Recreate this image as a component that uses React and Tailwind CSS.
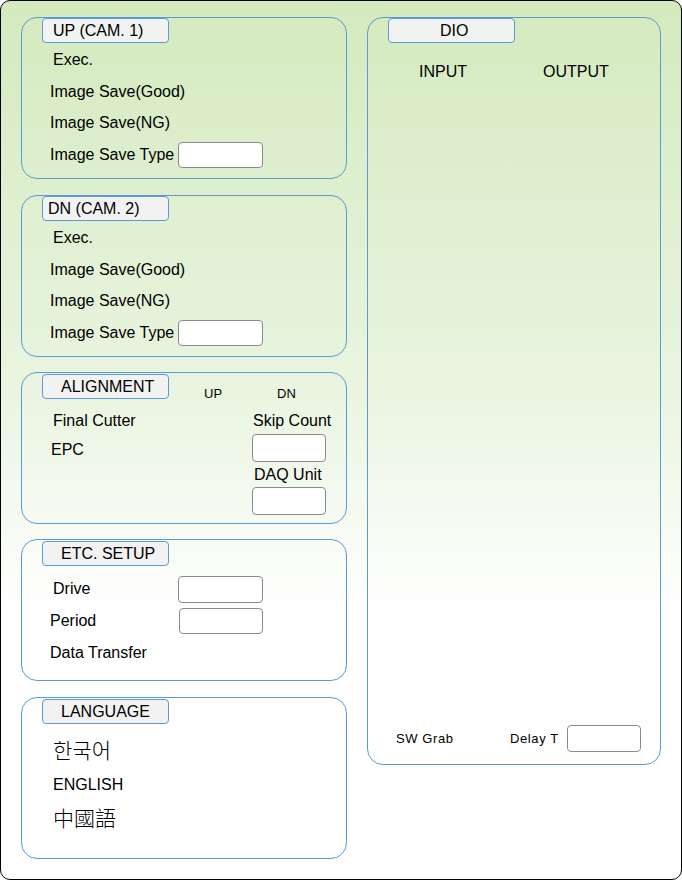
const font = { fontFamily: '"Liberation Sans", Arial, sans-serif' };

function Header({ children, className = '', pad = 'pl-[18px]' }) {
  return (
    <div
      className={`ml-[20px] w-[127px] h-[25px] shrink-0 bg-[#f2f2f2] border border-[#5b9bd5] rounded-[4px] flex items-center text-[16px] text-black leading-none ${pad} ${className}`}
    >
      {children}
    </div>
  );
}

function Box({ w = 'w-[85px]', h = 'h-[26px]', className = '' }) {
  return <div className={`${w} ${h} bg-white border border-[#8a8a8a] rounded-[4px] ${className}`} />;
}

function Panel({ className = '', children }) {
  return (
    <div className={`w-[326px] border border-[#5b9bd5] rounded-[16px] flex flex-col ${className}`}>
      {children}
    </div>
  );
}

function CamPanel({ title, pad, className = '' }) {
  return (
    <Panel className={`h-[162px] ${className}`}>
      <Header pad={pad}>{title}</Header>
      <div className="flex flex-col mt-[1.5px] text-[16px]">
        <div className="h-[31.5px] flex items-center pl-[31px]">Exec.</div>
        <div className="h-[31.5px] flex items-center pl-[28px]">Image Save(Good)</div>
        <div className="h-[31.5px] flex items-center pl-[28px]">Image Save(NG)</div>
        <div className="h-[31.5px] flex items-center pl-[28px]">
          <span className="w-[128px] shrink-0">Image Save Type</span>
          <Box />
        </div>
      </div>
    </Panel>
  );
}

export default function App() {
  return (
    <div
      style={font}
      className="w-[682px] h-[880px] border border-black rounded-[10px] bg-linear-to-b from-[#d4eabe] via-[#eaf5e1] via-45% to-white to-[70%] text-black flex gap-[20px] pl-[20px] pt-[16px]"
    >
      <div className="flex flex-col">
        <CamPanel title="UP (CAM. 1)" pad="pl-[10px]" />
        <CamPanel title="DN (CAM. 2)" pad="pl-[5px]" className="mt-[16px]" />

        <Panel className="h-[152px] mt-[15px]">
          <div className="flex items-start h-[26px] shrink-0">
            <Header className="mt-[1px] h-[24px]">ALIGNMENT</Header>
            <span className="ml-[35px] mt-[11px] text-[13px]">UP</span>
            <span className="ml-[55px] mt-[11px] text-[13px]">DN</span>
          </div>
          <div className="flex text-[16px]">
            <div className="w-[230px] pt-[7px] flex flex-col">
              <div className="h-[29px] flex items-center pl-[31px]">Final Cutter</div>
              <div className="h-[29px] flex items-center pl-[29px]">EPC</div>
            </div>
            <div className="flex flex-col pt-[13px]">
              <span className="leading-[18px] ml-[1px]">Skip Count</span>
              <Box w="w-[74px]" h="h-[28px]" className="mt-[4px]" />
              <span className="leading-[18px] mt-[4px] ml-[2px]">DAQ Unit</span>
              <Box w="w-[74px]" h="h-[28px]" className="mt-[3px]" />
            </div>
          </div>
        </Panel>

        <Panel className="h-[142px] mt-[15px]">
          <Header className="mt-[1px] h-[24px]">ETC. SETUP</Header>
          <div className="flex flex-col mt-[7px] text-[16px]">
            <div className="h-8 flex items-center pl-[31px]">
              <span className="w-[125px] shrink-0">Drive</span>
              <Box h="h-[27px]" />
            </div>
            <div className="h-8 flex items-center pl-[28px]">
              <span className="w-[129px] shrink-0">Period</span>
              <Box w="w-[84px]" />
            </div>
            <div className="h-8 flex items-center pl-[28px]">Data Transfer</div>
          </div>
        </Panel>

        <Panel className="h-[162px] mt-[16px]">
          <Header className="mt-[1px] h-[24px]">LANGUAGE</Header>
          <div className="flex flex-col mt-[9px] pl-[31px]">
            <div
              className="h-[34px] flex items-center text-[21px] font-light"
              style={{ fontFamily: '"Noto Sans CJK KR", sans-serif' }}
            >
              한국어
            </div>
            <div className="h-[36px] flex items-center text-[16px]">ENGLISH</div>
            <div
              className="h-[30px] flex items-center text-[21px] font-light"
              style={{ fontFamily: '"Noto Sans CJK TC", sans-serif' }}
            >
              中國語
            </div>
          </div>
        </Panel>
      </div>

      <div className="w-[294px] h-[748px] border border-[#5b9bd5] rounded-[16px] flex flex-col">
        <Header pad="pl-[51px]">DIO</Header>
        <div className="flex text-[16px] mt-[17px]">
          <span className="ml-[51px]">INPUT</span>
          <span className="ml-[76px]">OUTPUT</span>
        </div>
        <div className="flex-1" />
        <div className="flex items-center h-[27px] mb-[12px] text-[13px] tracking-[0.6px]">
          <span className="ml-[28px] w-[114px] shrink-0">SW Grab</span>
          <span className="w-[57px] shrink-0">Delay T</span>
          <Box w="w-[74px]" h="h-[27px]" />
        </div>
      </div>
    </div>
  );
}
